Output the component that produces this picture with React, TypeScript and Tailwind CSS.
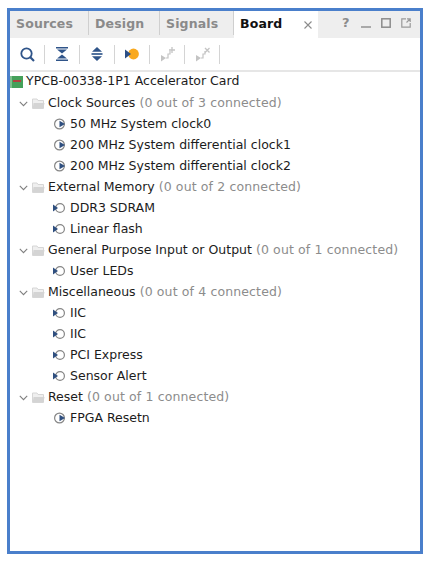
import React from "react";

const F = { fontFamily: '"DejaVu Sans", sans-serif' };

function Chevron() {
  return (
    <svg width="9" height="6" viewBox="0 0 9 6" className="shrink-0">
      <path d="M0.8 0.8 L4.5 4.6 L8.2 0.8" fill="none" stroke="#7f7f7f" strokeWidth="1.1" />
    </svg>
  );
}

function Folder() {
  return (
    <svg width="13" height="11" viewBox="0 0 13 11" className="shrink-0">
      <path d="M0.5 1 H5 L6 2.5 H11.5 V10.5 H0.5 Z" fill="#efefef" stroke="#d6d6d6" strokeWidth="1" />
      <path d="M1.5 5 H12.5 L11.5 10 H0.8 Z" fill="#d4d4d4" />
    </svg>
  );
}

function Clock() {
  return (
    <svg width="13" height="12" viewBox="0 0 13 12" className="shrink-0 -mt-[1px]">
      <circle cx="7.5" cy="6" r="4.9" fill="#fff" stroke="#858585" strokeWidth="1.2" />
      <path d="M7.5 2.8 L13 6 L7.5 9.2 Z" fill="#2f4f7f" />
    </svg>
  );
}

function Port() {
  return (
    <svg width="13" height="12" viewBox="0 0 13 12" className="shrink-0 -mt-[1px]">
      <circle cx="8" cy="6" r="4.4" fill="#fff" stroke="#858585" strokeWidth="1.2" />
      <path d="M1 2.5 L6 6 L1 9.5 Z" fill="#2f4f7f" />
    </svg>
  );
}

function Tool({ children }: { children: React.ReactNode }) {
  return (
    <div className="w-[35px] flex items-center">
      <div className="flex-1 flex justify-center items-center">{children}</div>
      <div className="w-px h-[19px] bg-[#d4d4d4] shrink-0" />
    </div>
  );
}

function Group({ title, count, items }: { title: string; count: string; items: { icon: "clock" | "port"; label: string }[] }) {
  return (
    <>
      <div className="h-[21px] flex items-center pl-[9px]">
        <Chevron />
        <div className="ml-[4px]"><Folder /></div>
        <span className="ml-[3px] text-[#1c1c1c] whitespace-pre">{title}</span>
        <span className="ml-[4px] text-[#8c8c8c] whitespace-pre tracking-[0.13px]">{count}</span>
      </div>
      {items.map((it, i) => (
        <div key={i} className="h-[21px] flex items-center pl-[42px]">
          {it.icon === "clock" ? <Clock /> : <Port />}
          <span className="ml-[5px] text-[#1c1c1c] whitespace-pre">{it.label}</span>
        </div>
      ))}
    </>
  );
}

export default function App() {
  return (
    <div className="w-[430px] h-[561px] bg-white pt-2 pl-[7px]" style={F}>
      <div className="w-[416px] h-[546px] border-[3px] border-[#4a7fcb] bg-white flex flex-col text-[12.5px]">
        <div className="h-[27px] bg-[#eeeeee] flex items-stretch shrink-0 font-bold text-[12.5px] tracking-[0.15px] pb-[3px]">
          <div className="w-[79px] pl-[6px] pt-[2px] flex items-center text-[#8a8a8a] border-r border-[#cfcfcf]">Sources</div>
          <div className="w-[71px] pl-[6px] pt-[2px] flex items-center text-[#8a8a8a] border-r border-[#cfcfcf]">Design</div>
          <div className="w-[74px] pl-[6px] pt-[2px] flex items-center text-[#8a8a8a] border-r border-[#cfcfcf]">Signals</div>
          <div className="w-[84px] bg-white -mb-[3px] pb-[3px] pt-[2px] pl-[6px] pr-[6px] flex items-center justify-between text-[#111]">
            <span>Board</span>
            <svg width="8" height="8" viewBox="0 0 8 8" className="mt-[1px]">
              <path d="M0.5 0.5 L7.5 7.5 M7.5 0.5 L0.5 7.5" stroke="#8c8c8c" strokeWidth="1.1" />
            </svg>
          </div>
          <div className="flex-1 flex items-center pl-[24px] gap-[10px]">
            <span className="text-[#8c8c8c] text-[13px] w-[9px]">?</span>
            <svg width="10" height="10" viewBox="0 0 10 10"><path d="M0 9 H10" stroke="#8c8c8c" strokeWidth="1.4" /></svg>
            <svg width="10" height="10" viewBox="0 0 10 10"><rect x="0.8" y="0.8" width="8.4" height="8.4" fill="none" stroke="#8c8c8c" strokeWidth="1.5" /></svg>
            <svg width="10" height="10" viewBox="0 0 10 10"><path d="M5 0.8 H0.8 V9.2 H9.2 V5 M6 0.8 H9.2 V4 M9 1 L5.5 4.5" fill="none" stroke="#9a9a9a" strokeWidth="1.2" /></svg>
          </div>
        </div>
        <div className="h-[32px] flex items-stretch shrink-0">
          <Tool>
            <svg width="15" height="15" viewBox="0 0 15 15">
              <circle cx="6.5" cy="6.5" r="5.2" fill="none" stroke="#2f5489" strokeWidth="1.8" />
              <path d="M10.3 10.3 L14 14" stroke="#2f5489" strokeWidth="2.2" />
            </svg>
          </Tool>
          <Tool>
            <svg width="12" height="14" viewBox="0 0 12 14">
              <path d="M0 0 H12 V1.6 H0 Z M0 12.4 H12 V14 H0 Z" fill="#2f5489" />
              <path d="M1 2.6 H11 L6 6.4 Z M1 11.4 H11 L6 7.6 Z" fill="#2f5489" />
            </svg>
          </Tool>
          <Tool>
            <svg width="12" height="14" viewBox="0 0 12 14">
              <path d="M6 0 L11 4.8 H1 Z M6 14 L11 9.2 H1 Z" fill="#2f5489" />
              <path d="M0.5 7 H11.5" stroke="#3f6294" strokeWidth="1.8" />
            </svg>
          </Tool>
          <Tool>
            <svg width="14" height="12" viewBox="0 0 14 12">
              <circle cx="8.5" cy="6" r="5.4" fill="#f9a91e" />
              <path d="M0 1.5 L6 6 L0 10.5 Z" fill="#2c4f85" />
            </svg>
          </Tool>
          <Tool>
            <svg width="15" height="15" viewBox="0 0 15 15">
              <path d="M1 8 L6 11 L1 14.5 Z" fill="#c4c4c4" />
              <path d="M6 11 H8 V7 H10 V4" fill="none" stroke="#c4c4c4" strokeWidth="1.2" />
              <path d="M9 3 H15 M12 0 V6" stroke="#c4c4c4" strokeWidth="1.3" />
            </svg>
          </Tool>
          <Tool>
            <svg width="15" height="15" viewBox="0 0 15 15">
              <path d="M1 8 L6 11 L1 14.5 Z" fill="#c4c4c4" />
              <path d="M6 11 H8 V7 H10 V4" fill="none" stroke="#c4c4c4" strokeWidth="1.2" />
              <path d="M10 1 L14.5 5.5 M14.5 1 L10 5.5" stroke="#c4c4c4" strokeWidth="1.3" />
            </svg>
          </Tool>
        </div>
        <div className="h-[2px] bg-[#e6e6e6] shrink-0" />
        <div className="flex-1">
          <div className="h-[19px] mb-[2px] flex items-center">
            <svg width="13" height="12" viewBox="0 0 13 12" className="shrink-0 mt-[1px]">
              <rect width="13" height="12" fill="#45a05a" />
              <rect x="0" y="0" width="2" height="12" fill="#7dbf8d" />
              <rect x="3" y="4" width="8" height="2" fill="#b23f3f" />
            </svg>
            <span className="ml-[3px] text-[#1c1c1c]">YPCB-00338-1P1 Accelerator Card</span>
          </div>
          <Group
            title="Clock Sources"
            count="(0 out of 3 connected)"
            items={[
              { icon: "clock", label: "50 MHz System clock0" },
              { icon: "clock", label: "200 MHz System differential clock1" },
              { icon: "clock", label: "200 MHz System differential clock2" },
            ]}
          />
          <Group
            title="External Memory"
            count="(0 out of 2 connected)"
            items={[
              { icon: "port", label: "DDR3 SDRAM" },
              { icon: "port", label: "Linear flash" },
            ]}
          />
          <Group
            title="General Purpose Input or Output"
            count="(0 out of 1 connected)"
            items={[{ icon: "port", label: "User LEDs" }]}
          />
          <Group
            title="Miscellaneous"
            count="(0 out of 4 connected)"
            items={[
              { icon: "port", label: "IIC" },
              { icon: "port", label: "IIC" },
              { icon: "port", label: "PCI Express" },
              { icon: "port", label: "Sensor Alert" },
            ]}
          />
          <Group
            title="Reset"
            count="(0 out of 1 connected)"
            items={[{ icon: "clock", label: "FPGA Resetn" }]}
          />
        </div>
      </div>
    </div>
  );
}
